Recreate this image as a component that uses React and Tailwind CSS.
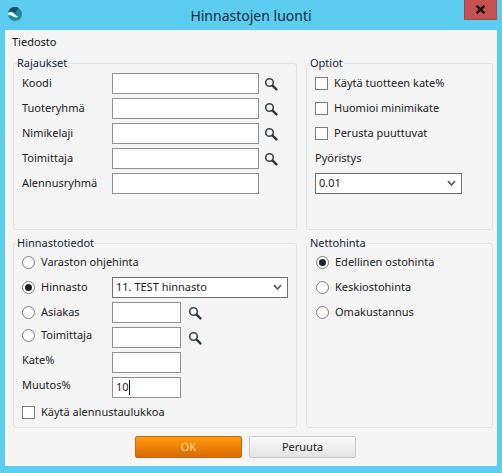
import React from 'react';

const fontClass = "font-['Noto_Sans','Open_Sans',sans-serif]";

function SearchIcon() {
  return (
    <svg width="14" height="14" viewBox="0 0 14 14" className="shrink-0">
      <circle cx="5.5" cy="5.5" r="3.8" fill="#f4f7f8" stroke="#3c4448" strokeWidth="1.6" />
      <path d="M8.6 8.6 L12.4 12.4" stroke="#30373b" strokeWidth="2.4" strokeLinecap="round" />
    </svg>
  );
}

function Chevron() {
  return (
    <svg width="9" height="7" viewBox="0 0 9 7" className="shrink-0">
      <path d="M1 1.2 L4.5 5 L8 1.2" fill="none" stroke="#5a6268" strokeWidth="1.8" />
    </svg>
  );
}

function Input({ width = 'w-[147px]', children }) {
  return (
    <div className={`${width} h-[21px] bg-white border border-[#8f8f8f] flex items-center pl-[3px] text-[11px] text-[#222] shrink-0`}>
      {children}
    </div>
  );
}

function Select({ width, value }) {
  return (
    <div className={`${width} h-[21px] bg-white border border-[#6f6f6f] flex items-center justify-between pl-[3px] pr-[5px] text-[11px] text-[#222] shrink-0`}>
      <span>{value}</span>
      <Chevron />
    </div>
  );
}

function Checkbox() {
  return <div className="w-[13px] h-[13px] bg-white border border-[#7c7c7c] shrink-0" />;
}

function Radio({ checked }) {
  return (
    <div className="w-[13px] h-[13px] rounded-full bg-white border border-[#7c7c7c] shrink-0 flex items-center justify-center">
      {checked && <div className="w-[7px] h-[7px] rounded-full bg-[#222]" />}
    </div>
  );
}

function Group({ title, className, children }) {
  return (
    <fieldset className={`border border-[#dfe3e6] rounded-[3px] min-w-0 ${className}`}>
      <legend className="ml-[2px] px-px text-[11px] leading-4 text-[#12233f]">{title}</legend>
      {children}
    </fieldset>
  );
}

function FilterRow({ label, search = true }) {
  return (
    <div className="flex items-center h-[21px]">
      <span className="w-[90px] shrink-0">{label}</span>
      <Input />
      {search && <div className="ml-[5px]"><SearchIcon /></div>}
    </div>
  );
}

function OptionRow({ control, label }) {
  return (
    <div className="flex items-center h-[21px] gap-[6px]">
      {control}
      <span>{label}</span>
    </div>
  );
}

function PriceRow({ control, label, raised, children }) {
  return (
    <div className="flex items-center h-[21px]">
      <div className={`w-[90px] shrink-0 flex items-center gap-[6px] ${raised ? 'pb-[5px]' : ''}`}>
        {control}
        <span>{label}</span>
      </div>
      {children}
    </div>
  );
}

export default function App() {
  return (
    <div className={`w-[502px] h-[473px] bg-[#5ccdf0] flex flex-col overflow-hidden ${fontClass}`}>
      {/* title bar */}
      <div className="relative h-[30px] shrink-0 flex items-center justify-center">
        <svg width="16" height="16" viewBox="0 0 16 16" className="absolute left-[7px] top-[6px]">
          <circle cx="8" cy="8" r="7" fill="#1c8a98" />
          <path d="M8 1 A7 7 0 0 0 1.3 6 C3.5 4.5 6 5 8 7 C9.5 5 10.5 3.5 11.5 2 A7 7 0 0 0 8 1 Z" fill="#1b4d66" />
          <path d="M1.2 7 C3.5 5 5.5 6 7.5 8 C8.8 9.3 10 10.5 11.5 10.8 C9.5 12 7 11.5 5 10 C3.5 9 2.3 8.8 1.4 9.5 Z" fill="#f2fafb" />
        </svg>
        <span className="text-[14px] text-[#10293d]">Hinnastojen luonti</span>
        <div className="absolute right-[5px] top-0 w-[33px] h-[20px] bg-[#c75050] border border-[#9c4a45] border-t-0 flex items-center justify-center">
          <svg width="11" height="9" viewBox="0 0 11 9">
            <path d="M1.5 0.8 L9.5 8.2 M9.5 0.8 L1.5 8.2" stroke="#1b1010" strokeWidth="2.4" />
          </svg>
        </div>
      </div>

      {/* client area */}
      <div className="mx-[5px] h-[436px] bg-[#f5f5f6] flex flex-col px-[8px] text-[11px] text-[#222]">
        <div className="h-[25px] shrink-0 flex items-center -ml-px text-[#111]">Tiedosto</div>

        <div className="grid grid-cols-[284px_187px] grid-rows-[175px_193px] gap-x-[9px] gap-y-[5px]">
          <Group title="Rajaukset">
            <div className="pt-[2px] pl-[8px] flex flex-col gap-1">
              <FilterRow label="Koodi" />
              <FilterRow label="Tuoteryhmä" />
              <FilterRow label="Nimikelaji" />
              <FilterRow label="Toimittaja" />
              <FilterRow label="Alennusryhmä" search={false} />
            </div>
          </Group>

          <Group title="Optiot">
            <div className="pt-[2px] pl-[8px] flex flex-col gap-1">
              <OptionRow control={<Checkbox />} label="Käytä tuotteen kate%" />
              <OptionRow control={<Checkbox />} label="Huomioi minimikate" />
              <OptionRow control={<Checkbox />} label="Perusta puuttuvat" />
              <div className="h-[21px] flex items-center">Pyöristys</div>
              <Select width="w-[147px]" value="0.01" />
            </div>
          </Group>

          <Group title="Hinnastotiedot">
            <div className="pt-px pl-[8px] flex flex-col gap-1">
              <OptionRow control={<Radio />} label="Varaston ohjehinta" />
              <PriceRow control={<Radio checked />} label="Hinnasto">
                <Select width="w-[176px]" value="11. TEST hinnasto" />
              </PriceRow>
              <PriceRow control={<Radio />} label="Asiakas">
                <Input width="w-[69px]" />
                <div className="ml-[7px]"><SearchIcon /></div>
              </PriceRow>
              <PriceRow control={<Radio />} label="Toimittaja" raised>
                <Input width="w-[69px]" />
                <div className="ml-[7px]"><SearchIcon /></div>
              </PriceRow>
              <PriceRow label="Kate%" raised>
                <Input width="w-[69px]" />
              </PriceRow>
              <PriceRow label="Muutos%" raised>
                <Input width="w-[69px]">
                  10<span className="w-px h-[15px] bg-[#111]" />
                </Input>
              </PriceRow>
              <OptionRow control={<Checkbox />} label="Käytä alennustaulukkoa" />
            </div>
          </Group>

          <Group title="Nettohinta">
            <div className="pt-px pl-[9px] flex flex-col gap-1">
              <OptionRow control={<Radio checked />} label="Edellinen ostohinta" />
              <OptionRow control={<Radio />} label="Keskiostohinta" />
              <OptionRow control={<Radio />} label="Omakustannus" />
            </div>
          </Group>
        </div>

        <div className="mt-2 ml-[122px] flex gap-[7px]">
          <button className="w-[107px] h-[22px] rounded-[2px] bg-gradient-to-b from-[#ff9a0e] to-[#d96a00] border border-[#c46a10] text-[11px] text-[#ffd9a0]">
            OK
          </button>
          <button className="w-[107px] h-[22px] rounded-[2px] bg-gradient-to-b from-[#fbfbfb] to-[#e3e3e3] border border-[#c9c9c9] text-[11px] text-[#222]">
            Peruuta
          </button>
        </div>
      </div>
    </div>
  );
}
